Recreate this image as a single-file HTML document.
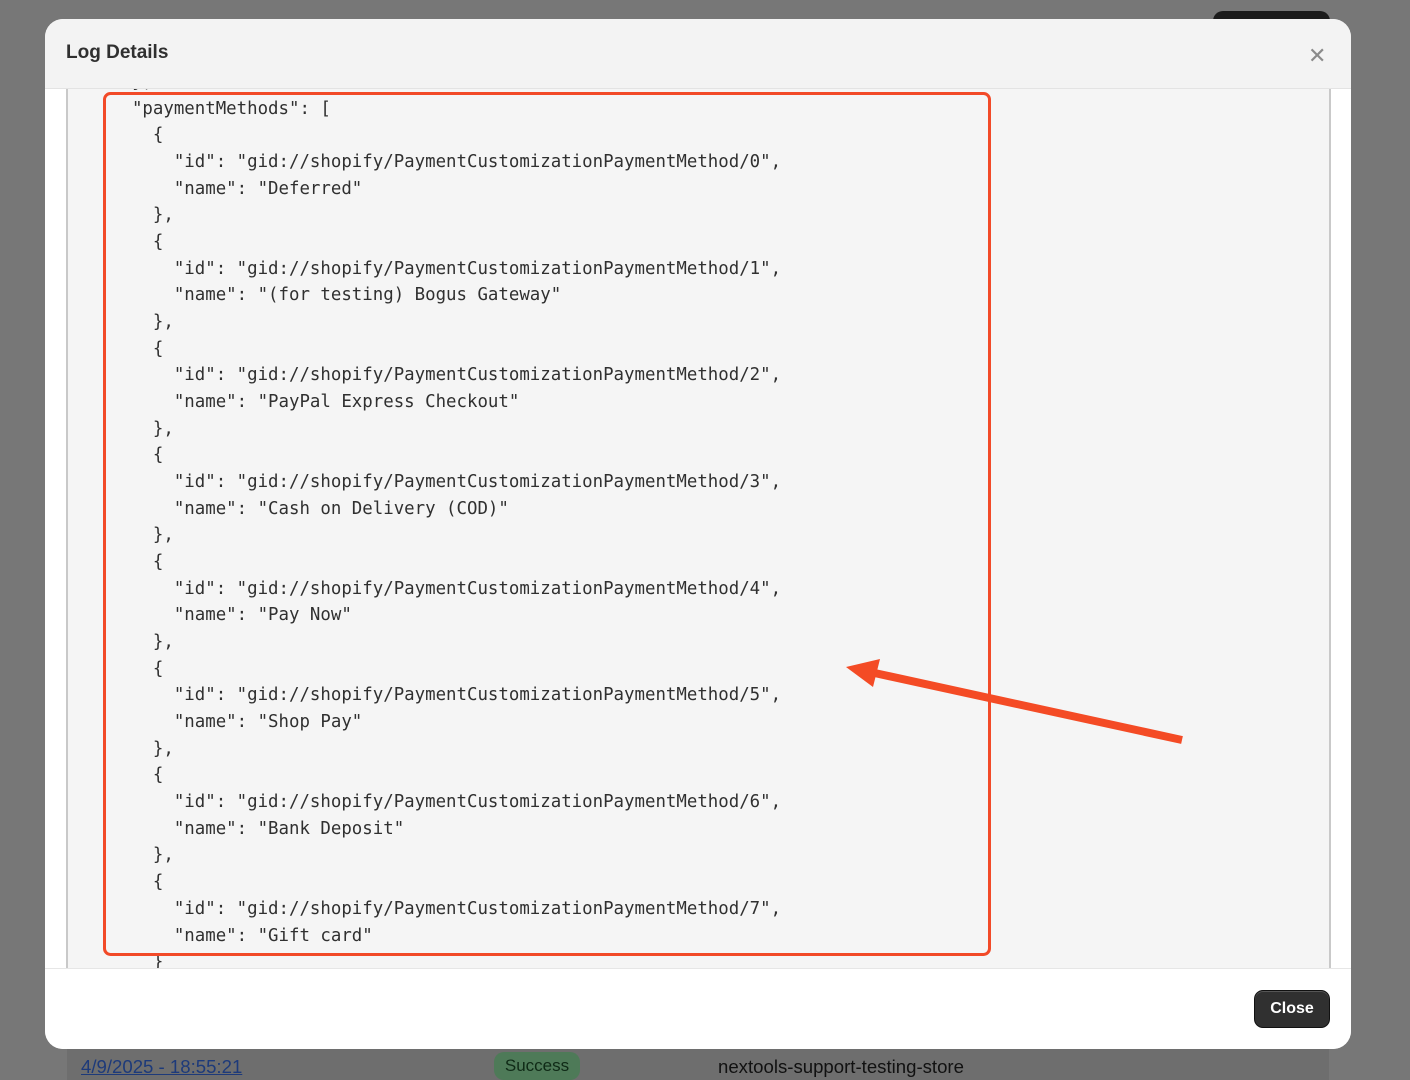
<!DOCTYPE html>
<html><head><meta charset="utf-8"><style>
html,body{margin:0;padding:0;width:1410px;height:1080px;overflow:hidden;background:#777;font-family:"Liberation Sans",sans-serif;position:relative}
.topbtn{position:absolute;left:1213px;top:11px;width:117px;height:30px;background:#1c1c1c;border-radius:10px}
.under{position:absolute;left:67px;top:1040px;width:1262px;height:50px;background:#6e6e6e}
.under .d{position:absolute;left:14px;top:16px;font-size:18.6px;color:#1d3a7a;text-decoration:underline}
.under .b{position:absolute;left:427px;top:12px;width:86px;height:28px;border-radius:10px;background:#4e7a58;color:#0f2a16;font-size:17px;line-height:28px;text-align:center}
.under .s{position:absolute;left:651px;top:16px;font-size:18.6px;color:#111}
.modal{position:absolute;left:45px;top:19px;width:1306px;height:1030px;background:#fff;border-radius:18px;overflow:hidden}
.hdr{position:absolute;left:0;top:0;width:100%;height:69px;background:#f3f3f3;border-bottom:1px solid #e3e3e3;z-index:3}
.hdr h1{margin:0;position:absolute;left:21px;top:23px;font-size:19px;font-weight:700;color:#303030}
.x{position:absolute;left:1263px;top:24px;font-size:22px;color:#8a8a8a}
.body{position:absolute;left:0;top:70px;width:100%;height:879px;background:#fff;overflow:hidden}
.code{position:absolute;left:21px;top:0;width:1261px;height:879px;background:#f5f5f5;border-left:2px solid #c9c9c9;border-right:2px solid #c9c9c9}
pre{margin:0;position:absolute;left:43px;top:-20px;font-family:"DejaVu Sans Mono","Liberation Mono",monospace;font-size:17.4px;line-height:26.67px;color:#303030}
.ftr{position:absolute;left:0;top:949px;width:100%;height:81px;background:#fff;border-top:1px solid #e6e6e6}
.close{position:absolute;left:1209px;top:21px;width:74px;height:36px;background:#303030;border:1px solid #111;border-radius:9px;color:#fff;font-weight:700;font-size:16px;line-height:36px;text-align:center;box-shadow:inset 0 1px 0 #555}
svg{position:absolute;left:0;top:0}
</style></head><body>
<div class="topbtn"></div>
<div class="under"><span class="d">4/9/2025 - 18:55:21</span><span class="b">Success</span><span class="s">nextools-support-testing-store</span></div>
<div class="modal">
<div class="hdr"><h1>Log Details</h1><span class="x">✕</span></div>
<div class="body"><div class="code"><pre>  },
  "paymentMethods": [
    {
      "id": "gid://shopify/PaymentCustomizationPaymentMethod/0",
      "name": "Deferred"
    },
    {
      "id": "gid://shopify/PaymentCustomizationPaymentMethod/1",
      "name": "(for testing) Bogus Gateway"
    },
    {
      "id": "gid://shopify/PaymentCustomizationPaymentMethod/2",
      "name": "PayPal Express Checkout"
    },
    {
      "id": "gid://shopify/PaymentCustomizationPaymentMethod/3",
      "name": "Cash on Delivery (COD)"
    },
    {
      "id": "gid://shopify/PaymentCustomizationPaymentMethod/4",
      "name": "Pay Now"
    },
    {
      "id": "gid://shopify/PaymentCustomizationPaymentMethod/5",
      "name": "Shop Pay"
    },
    {
      "id": "gid://shopify/PaymentCustomizationPaymentMethod/6",
      "name": "Bank Deposit"
    },
    {
      "id": "gid://shopify/PaymentCustomizationPaymentMethod/7",
      "name": "Gift card"
    }
</pre></div></div>
<div class="ftr"><div class="close">Close</div></div>
</div>
<svg width="1410" height="1080">
<rect x="104.5" y="93.5" width="885" height="861" rx="6" fill="none" stroke="#f24a28" stroke-width="3"/>
<line x1="1182" y1="740" x2="870" y2="672" stroke="#f44b25" stroke-width="8"/>
<polygon points="846,667 880,659 873,687" fill="#f44b25"/>
</svg>
</body></html>
